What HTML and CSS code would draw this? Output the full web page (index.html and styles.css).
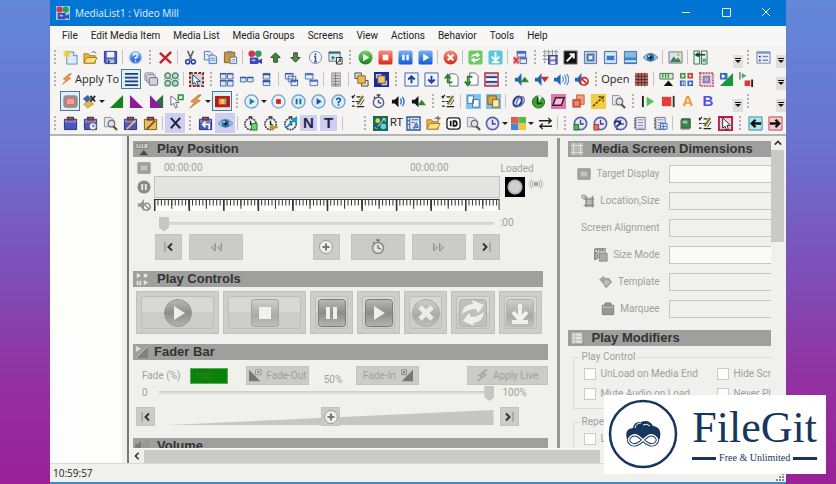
FILE: index.html
```html
<!DOCTYPE html>
<html lang="en">
<head>
<meta charset="utf-8">
<title>MediaList1 : Video Mill</title>
<link rel="stylesheet" href="styles.css">
</head>
<body>
<svg class="sprite" aria-hidden="true">
<defs>
<linearGradient id="gBlue" x2="0" y2="1"><stop offset="0" stop-color="#7db4f4"/><stop offset="1" stop-color="#1257d0"/></linearGradient>
<linearGradient id="gRed" x2="0" y2="1"><stop offset="0" stop-color="#f6907c"/><stop offset="1" stop-color="#d52a1c"/></linearGradient>
<linearGradient id="gGreen" x2="0" y2="1"><stop offset="0" stop-color="#7fd070"/><stop offset="1" stop-color="#138018"/></linearGradient>
<linearGradient id="gGrey" x2="0" y2="1"><stop offset="0" stop-color="#b9b9b7"/><stop offset=".5" stop-color="#8d8d8b"/><stop offset="1" stop-color="#b4b4b2"/></linearGradient>
<linearGradient id="gSoft" x2="0" y2="1"><stop offset="0" stop-color="#cfcfcc"/><stop offset=".6" stop-color="#a9a9a6"/><stop offset="1" stop-color="#c0c0bd"/></linearGradient>
</defs>
<symbol id="new" viewBox="0 0 16 16"><path d="M4 2h7l4 4v9H4z" fill="#dcebfb" stroke="#6b84ae"/><path d="M11 2v4h4" fill="#fff" stroke="#6b84ae"/><path d="M4 0v8M0 4h8M1 1l6 6M7 1L1 7" stroke="#e2cf2c" stroke-width="1.3"/></symbol>
<symbol id="open" viewBox="0 0 16 16"><path d="M1 14V4h5l1 2h6v8z" fill="#e9b93c" stroke="#a87a1c"/><path d="M1 14l3-6h11l-3 6z" fill="#ffe08a" stroke="#a87a1c"/><path d="M9 3q3-3 5 1" fill="none" stroke="#3a6fc0"/></symbol>
<symbol id="save" viewBox="0 0 16 16"><path d="M1.500 1.500h13v13h-12l-1-1z" fill="#4a63c8" stroke="#27357f"/><path d="M4 2h8v6H4z" fill="#eef3ff"/><path d="M4 10h8v4H4z" fill="#b9bfd4"/><path d="M5 11h2v3H5z" fill="#27357f"/></symbol>
<symbol id="help" viewBox="0 0 16 16"><circle cx="8" cy="8" r="6.500" fill="url(#gBlue)" stroke="#b4c8e4" stroke-width="1.600"/><path d="M5.800 6q0-2.200 2.200-2.200T10.200 6Q10.200 7.500 8 8.500V9.500M8 10.800v1.600" fill="none" stroke="#fff" stroke-width="1.600"/></symbol>
<symbol id="del" viewBox="0 0 16 16"><path d="M2 3l12 11M14 2L2 14" stroke="#c4212c" stroke-width="2.600"/></symbol>
<symbol id="cut" viewBox="0 0 16 16"><path d="M5 1l4 9M11 1L7 10" stroke="#5b6270" stroke-width="1.700"/><circle cx="5" cy="12.500" r="2.200" fill="none" stroke="#283a9c" stroke-width="1.600"/><circle cx="11" cy="12.500" r="2.200" fill="none" stroke="#283a9c" stroke-width="1.600"/></symbol>
<symbol id="copy" viewBox="0 0 16 16"><path d="M1.500 1.500h6l2 2v7h-8z" fill="#e5eefb" stroke="#5272b4"/><path d="M6.500 5.500h6l2 2v7h-8z" fill="#d4e2f8" stroke="#5272b4"/><path d="M8 9h5M8 11h5M3 5h3" stroke="#7c97cc"/></symbol>
<symbol id="paste" viewBox="0 0 16 16"><path d="M1.500 2.500h11v11h-11z" fill="#c99a3c" stroke="#84601c"/><path d="M4 1h6v3H4z" fill="#8a8a8a"/><path d="M7.500 7.500h7v7h-7z" fill="#eef3fd" stroke="#5a6e9c"/><path d="M9 10h4M9 12h4" stroke="#7c97cc"/></symbol>
<symbol id="media" viewBox="0 0 16 16"><circle cx="4" cy="4" r="3.500" fill="#d2344a"/><circle cx="11" cy="4" r="3.500" fill="#2c9c56"/><path d="M2 8h9v7H2zM11 11l4-2v6l-4-2z" fill="#3c46b4"/><path d="M4 10h4v2H4z" fill="#a8b4f0"/></symbol>
<symbol id="up" viewBox="0 0 16 16"><path d="M8 3l5 5h-3v5H6V8H3z" fill="#3e8a38" stroke="#24521f"/></symbol>
<symbol id="down" viewBox="0 0 16 16"><path d="M8 13l5-5h-3V3H6v5H3z" fill="#5c8450" stroke="#31502b"/></symbol>
<symbol id="info" viewBox="0 0 16 16"><circle cx="8" cy="8" r="6.500" fill="#f4f7fc" stroke="#7d8aa0"/><path d="M8 3.500v2M8 7v5.500M6.500 12.500h3M6.500 7h2" stroke="#34529c" stroke-width="1.500"/></symbol>
<symbol id="props" viewBox="0 0 16 16"><path d="M1 2h12v10H1z" fill="#dfe9ee" stroke="#5a7484"/><path d="M1 2h12v2H1z" fill="#42678c"/><path d="M4 6l4 2-4 3z" fill="#2c8a4c"/><path d="M9 8h6v7H9z" fill="#fff" stroke="#222"/><path d="M10 14l3-5M13 9v4" stroke="#222"/></symbol>
<symbol id="gplay" viewBox="0 0 16 16"><circle cx="8" cy="8" r="7.500" fill="url(#gGreen)"/><path d="M5.500 4l6.500 4-6.500 4z" fill="#fff"/></symbol>
<symbol id="rstop" viewBox="0 0 16 16"><rect x=".5" y=".5" width="15" height="15" rx="2" fill="url(#gRed)"/><path d="M5 5h6v6H5z" fill="#fff"/></symbol>
<symbol id="bpause" viewBox="0 0 16 16"><rect x=".5" y=".5" width="15" height="15" rx="2" fill="url(#gBlue)"/><path d="M4.500 5H7v6H4.500zM9 5h2.500v6H9z" fill="#fff"/></symbol>
<symbol id="bplay" viewBox="0 0 16 16"><rect x=".5" y=".5" width="15" height="15" rx="2" fill="url(#gBlue)"/><path d="M5.500 4l6.500 4-6.500 4z" fill="#fff"/></symbol>
<symbol id="rx" viewBox="0 0 16 16"><circle cx="8" cy="8" r="7.500" fill="url(#gRed)"/><path d="M5 5l6 6M11 5l-6 6" stroke="#fff" stroke-width="2.400"/></symbol>
<symbol id="refresh" viewBox="0 0 16 16"><rect x=".5" y=".5" width="15" height="15" rx="2" fill="#6fc964"/><path d="M3 8q1-4 6-4V2l4 3.500L9 8V6Q6 6 3 8zM13 8q-1 4-6 4v2l-4-3.500L7 8v2q3 0 6-2z" fill="#fff"/></symbol>
<symbol id="load" viewBox="0 0 16 16"><rect x=".5" y=".5" width="15" height="15" rx="2" fill="#5cc6dc"/><path d="M8 2v9M4 7l4 4 4-4M4 13h8" fill="none" stroke="#fff" stroke-width="2"/></symbol>
<symbol id="winx" viewBox="0 0 16 16"><path d="M4.500 1.500h9v6h-9z" fill="#dbe6fa" stroke="#4560a8"/><path d="M4 1h10v3H4z" fill="#4a6cc4"/><path d="M7.500 8.500h7v6h-7z" fill="#e8eefa" stroke="#4560a8"/><path d="M7 8h8v2H7z" fill="#4a6cc4"/><path d="M0 7h7v8H0z" fill="#f4a8b0"/><path d="M1 8l5 6M6 8l-5 6" stroke="#cc3444" stroke-width="1.600"/></symbol>
<symbol id="gridsave" viewBox="0 0 16 16"><path d="M2 0v14M6 0v14M10 0v8M14 0v8M0 2h16M0 6h16M0 10h8" stroke="#6a6a80" stroke-dasharray="2 1"/><path d="M6 6h9v9H6z" fill="#6b70b0" stroke="#33366e"/><path d="M8 7h5v3H8zM8 12h5v3H8z" fill="#eef"/></symbol>
<symbol id="black" viewBox="0 0 16 16"><path d="M1 1h14v14H1z" fill="#111" stroke="#777"/><path d="M4 12l7-7M7 4.500h4.500V9" stroke="#fff" stroke-width="2" fill="none"/></symbol>
<symbol id="scr1" viewBox="0 0 16 16"><path d="M1.500 1.500h13v13h-13z" fill="#bcd0ec" stroke="#56729c"/><path d="M4.500 4.500h7v7h-7z" fill="#7ca0d0" stroke="#34588c"/><path d="M6.500 6.500h3v3h-3z" fill="#fff"/></symbol>
<symbol id="scr2" viewBox="0 0 16 16"><path d="M1.500 1.500h13v13h-13z" fill="#c8dcf4" stroke="#4c6ca4"/><path d="M4 4h8v8H4z" fill="#eef6ff"/><path d="M4 6h8v5H4z" fill="#3878c8"/></symbol>
<symbol id="scr3" viewBox="0 0 16 16"><path d="M1.500 1.500h13v13h-13z" fill="#4084c8" stroke="#4c6ca4"/><path d="M2 2h12v6H2z" fill="#84b8e8"/><path d="M2 11h12v2H2z" fill="#dcecfa"/></symbol>
<symbol id="eye" viewBox="0 0 16 16"><path d="M0 8q8-9 16 0-8 8-16 0z" fill="#9cc4dc" stroke="#5a86a4"/><circle cx="8" cy="8" r="4" fill="#2e6cb0"/><circle cx="8" cy="8" r="1.800" fill="#123"/><circle cx="6.500" cy="6.500" r="1" fill="#fff"/></symbol>
<symbol id="pic" viewBox="0 0 16 16"><path d="M1 2h14v12H1z" fill="#cfe4f4" stroke="#777"/><path d="M2 13l4-6 3 3 2-2 3 5z" fill="#4a7c4c"/><circle cx="11" cy="5" r="1.500" fill="#e8b838"/></symbol>
<symbol id="split" viewBox="0 0 16 16"><path d="M1 1h6v14H1zM9 1h6v14H9z" fill="#eaf4ec" stroke="#2e6c50"/><path d="M3 5h10M6 3L3 5l3 2" stroke="#143" stroke-width="1.600" fill="none"/><path d="M10 9h4v4h-4z" fill="#69b088"/></symbol>
<symbol id="form" viewBox="0 0 16 16"><path d="M1 2h14v12H1z" fill="#eef3fb" stroke="#6a80a8"/><path d="M1 2h14v2H1z" fill="#7898cc"/><path d="M3 7h2M3 11h2" stroke="#223c7c" stroke-width="2"/><path d="M7 7h6M7 11h6" stroke="#7a8ca8" stroke-width="1.500"/></symbol>
<symbol id="bolt" viewBox="0 0 16 16"><path d="M11 1L3 8l4 1-5 6 11-8-4-1 5-5z" fill="#f09a3c" stroke="#a8582c" stroke-width=".7"/></symbol>
<symbol id="lines" viewBox="0 0 16 16"><path d="M1 1h14v14H1z" fill="#dce6f6"/><path d="M1 2h14M1 6h14M1 10h14M1 14h14" stroke="#1f3f78" stroke-width="1.800"/></symbol>
<symbol id="stack" viewBox="0 0 16 16"><rect x="1" y="1" width="9" height="8" rx="1" fill="#e8e8ee" stroke="#777e90"/><rect x="3" y="3" width="9" height="8" rx="1" fill="#e8e8ee" stroke="#777e90"/><rect x="5.500" y="6" width="9" height="8" rx="1" fill="#cfd4de" stroke="#5c6578"/></symbol>
<symbol id="dots4" viewBox="0 0 16 16"><g fill="#cfe09c" stroke="#4c8c84" stroke-width="1.500"><circle cx="4" cy="4" r="3"/><circle cx="12" cy="4" r="3"/><circle cx="4" cy="12" r="3"/><circle cx="12" cy="12" r="3"/></g><path d="M7 8h2M8 7v2M0 8h1M15 8h1" stroke="#4c8c84"/></symbol>
<symbol id="pick" viewBox="0 0 16 16"><path d="M1 1h14v14H1z" fill="#ccd4d4" stroke="#8c2424" stroke-width="2" stroke-dasharray="3 1.500"/><path d="M4 3l8 7H8l2 4-2 1-2-4-2 2z" fill="#fff" stroke="#123c5c"/></symbol>
<symbol id="win4" viewBox="0 0 16 16"><g fill="#dce8fa" stroke="#4868a4"><path d="M1.500 1.500h6v6h-6zM9 1.500h6v6H9zM1.500 9h6v6h-6zM9 9h6v6H9z"/></g><path d="M1 2h7M9 2h6M1 9.500h7M9 9.500h6" stroke="#3050a0" stroke-width="1.500"/></symbol>
<symbol id="win2h" viewBox="0 0 16 16"><g fill="#dce8fa" stroke="#4868a4"><path d="M1.500 5.500h6v5h-6zM9 5.500h6v5H9z"/></g><path d="M1 6h7M9 6h6" stroke="#3050a0" stroke-width="1.500"/></symbol>
<symbol id="win2v" viewBox="0 0 16 16"><g fill="#dce8fa" stroke="#4868a4"><path d="M4.500 1.500h7v6h-7zM4.500 9h7v5.500h-7z"/></g><path d="M4 2.500h8M4 10h8" stroke="#3050a0" stroke-width="2"/></symbol>
<symbol id="casc" viewBox="0 0 16 16"><g fill="#e8f0fc" stroke="#4868a4"><path d="M1.500 1.500h8v6h-8zM4.500 4.500h8v6h-8zM7.500 8.500h7v6h-7z"/></g><path d="M1 2h9M7 9.500h8" stroke="#3050a0" stroke-width="1.500"/></symbol>
<symbol id="casc2" viewBox="0 0 16 16"><g fill="#e8f0fc" stroke="#5878b4"><path d="M1.500 1.500h8v6h-8zM6.500 8.500h8v6h-8z"/></g><path d="M1 2.500h9M6 9.500h9" stroke="#4a70c8" stroke-width="2"/></symbol>
<symbol id="list" viewBox="0 0 16 16"><path d="M3 1h9v14H3z" fill="#d8d8d4" stroke="#8a8a88"/><path d="M4 4h7M4 7h7M4 10h7M4 13h7M7 1v14" stroke="#777"/></symbol>
<symbol id="front" viewBox="0 0 16 16"><path d="M1 1h7v6H1z" fill="#ddd" stroke="#444"/><path d="M8 9h7v6H8z" fill="#ddd" stroke="#444"/><path d="M4 4h8v8H4z" fill="#f0b84c" stroke="#8a6a24"/></symbol>
<symbol id="frontb" viewBox="0 0 16 16"><path d="M0 0h16v16H0z" fill="#1a28a8"/><path d="M2 2h6v5H2zM8 9h6v5H8z" fill="#ccc"/><path d="M4 4h8v8H4z" fill="#f4c468" stroke="#553"/></symbol>
<symbol id="boxup" viewBox="0 0 16 16"><path d="M1 1h14v14H1z" fill="#f0f5fe" stroke="#3c62a8"/><path d="M8 12V5M4.500 8L8 4.500 11.500 8" fill="none" stroke="#1c3ca0" stroke-width="2"/></symbol>
<symbol id="boxdn" viewBox="0 0 16 16"><path d="M1 1h14v14H1z" fill="#f0f5fe" stroke="#3c62a8"/><path d="M8 4v7M4.500 8L8 11.500 11.500 8" fill="none" stroke="#1c3ca0" stroke-width="2"/></symbol>
<symbol id="pgup" viewBox="0 0 16 16"><path d="M6 2h6l3 3v10H6z" fill="#fff" stroke="#667"/><path d="M9 11H4V4M1 7l3-4 3 4" fill="none" stroke="#23862c" stroke-width="2"/></symbol>
<symbol id="pgdn" viewBox="0 0 16 16"><path d="M6 1h6l3 3v10H6z" fill="#fff" stroke="#667"/><path d="M9 5H4v8M1 10l3 4 3-4" fill="none" stroke="#23862c" stroke-width="2"/></symbol>
<symbol id="band" viewBox="0 0 16 16"><path d="M1 1h14v14H1z" fill="#cdd9f2" stroke="#b0303c" stroke-width="1.500"/><path d="M2 5.500h12M2 10.500h12" stroke="#283c80" stroke-width="2"/><path d="M2 7h12v2H2z" fill="#fff"/></symbol>
<symbol id="volup" viewBox="0 0 16 16"><path d="M1 6h3l4-5v14l-4-5H1z" fill="#2468b0"/><path d="M7 11l4.500-6 4.500 6z" fill="#2a8a34"/></symbol>
<symbol id="voldn" viewBox="0 0 16 16"><path d="M1 6h3l4-5v14l-4-5H1z" fill="#2468b0"/><path d="M7 5l4.500 6L16 5z" fill="#c83228"/></symbol>
<symbol id="vol" viewBox="0 0 16 16"><path d="M0 6h3l4-4v12l-4-4H0z" fill="#2468b0"/><path d="M9 5q2 3 0 6M11 3q4 5 0 10M13.500 2q4.500 6 0 12" fill="none" stroke="#4c8cd0" stroke-width="1.200"/></symbol>
<symbol id="volk" viewBox="0 0 16 16"><path d="M1 6h3l4-4v12l-4-4H1z" fill="#111"/><path d="M10 5q2 3 0 6M12 3q4 5 0 10" fill="none" stroke="#2c6cc0" stroke-width="1.400"/></symbol>
<symbol id="volkup" viewBox="0 0 16 16"><path d="M1 6h3l4-4v12l-4-4H1z" fill="#111"/><path d="M7 12l4.500-6 4.500 6z" fill="#2a8a34"/></symbol>
<symbol id="mute" viewBox="0 0 16 16"><path d="M1 6h3l4-5v14l-4-5H1z" fill="#2468b0"/><circle cx="11" cy="10" r="4" fill="#fff" stroke="#cc2a24" stroke-width="1.800"/><path d="M8.500 7.500l5 5" stroke="#cc2a24" stroke-width="1.800"/></symbol>
<symbol id="redgrid" viewBox="0 0 16 16"><path d="M1 1h14v14H1z" fill="#b86c64"/><path d="M1 4.500h14M1 8h14M1 11.500h14M4.500 1v14M8 1v14M11.500 1v14" stroke="#523030"/></symbol>
<symbol id="posbar" viewBox="0 0 16 16"><path d="M1 1.500h14v6H1z" fill="#d4f0d4" stroke="#4c6a4c"/><path d="M4 2v4M7 2v4M10 2v4" stroke="#31a038" stroke-width="1.500"/><path d="M5 15l5-6 5 6z" fill="#111"/></symbol>
<symbol id="ctl4" viewBox="0 0 16 16"><path d="M1 1h6v6H1z" fill="#3c9c3c"/><path d="M9 1h6v6H9z" fill="#d44434"/><path d="M1 9h6v6H1zM9 9h6v6H9z" fill="#2e68c8"/><path d="M3 2l3 2-3 2zM11 3h2v2h-2zM3 10h1v4H3zM5 10h1v4H5zM11 10l3 2-3 2z" fill="#fff"/></symbol>
<symbol id="wctl4" viewBox="0 0 16 16"><path d="M2 1l5 3-5 3zM10 2h4v4h-4zM2 10h2v5H2zM5 10h2v5H5zM10 9l5 3-5 3z" fill="#e6e6e4"/></symbol>
<symbol id="target" viewBox="0 0 16 16"><path d="M1 1h14v14H1z" fill="#ecd4dc" stroke="#c86478" stroke-dasharray="2 1" stroke-width="2"/><path d="M4 4h8v8H4z" fill="#7484cc"/><path d="M6 6h4v4H6z" fill="#e8a0ac"/></symbol>
<symbol id="fade" viewBox="0 0 16 16"><path d="M15 1v14H1z" fill="#159838"/><path d="M1 1h8v7H1z" fill="#2e68c8"/><path d="M3 2l4 2.500L3 7z" fill="#fff"/></symbol>
<symbol id="fadein" viewBox="0 0 16 16"><path d="M16 1v14H2z" fill="#777"/><path d="M2 1h6v6H2z" fill="#d6d6d4" stroke="#777"/><path d="M4 2l3 2-3 2z" fill="#666"/></symbol>
<symbol id="fadeout" viewBox="0 0 16 16"><path d="M0 1v14h14z" fill="#777"/><path d="M8 1h7v6H8z" fill="#d6d6d4" stroke="#8a8a88"/><path d="M10 3h3v2h-3z" fill="#777"/></symbol>
<symbol id="fader" viewBox="0 0 16 16"><path d="M15 1v14H1z" fill="#828280"/><path d="M15 1L1 15" stroke="#c8c8c6"/><path d="M1 1l6 3-6 4z" fill="#dededc"/></symbol>
<symbol id="playstop" viewBox="0 0 16 16"><path d="M1 0v8" stroke="#777" stroke-width="1.500"/><path d="M3 1l5 3-5 3z" fill="#48b058"/><path d="M6 9h6v6H6z" fill="#dc3c30"/><path d="M14 8v8" stroke="#222" stroke-width="2"/></symbol>
<symbol id="screenred" viewBox="0 0 16 16"><rect x="1" y="2" width="14" height="12" rx="2" fill="#9c9c9c" stroke="#777"/><path d="M3.500 4.500h9v7h-9z" fill="#f0a0a0" stroke="#dc5858"/></symbol>
<symbol id="brush" viewBox="0 0 16 16"><path d="M1 5l5-4 4 4-5 4z" fill="#3c66b4"/><path d="M2 11l7-5 3 5-6 4z" fill="#e8b83c" stroke="#8a6a24" stroke-width=".6"/><path d="M9 2l5 6M14 2L9 8" stroke="#222" stroke-width="1.800"/></symbol>
<symbol id="trig" viewBox="0 0 16 16"><path d="M15 1v14H1z" fill="#12851c"/></symbol>
<symbol id="trip" viewBox="0 0 16 16"><path d="M1 1v14h14z" fill="#90189c"/></symbol>
<symbol id="tripg" viewBox="0 0 16 16"><path d="M15 1v14H1z" fill="#12753c"/><path d="M1 1v14h13z" fill="#90189c"/><path d="M8 8l7-7v14z" fill="#2e6c48"/></symbol>
<symbol id="cursor" viewBox="0 0 16 16"><path d="M2 2l9 7H7l2 5-2 1-2-5-3 2z" fill="#fff" stroke="#667" /><path d="M10 1h5v5h-5z" fill="#d8f0d8" stroke="#25902c" stroke-width="1.500"/></symbol>
<symbol id="redbox" viewBox="0 0 16 16"><path d="M1 3h14v10H1z" fill="#a01818" stroke="#c41c1c" stroke-width="2"/><path d="M4 5h8v6H4z" fill="#e8d058"/><path d="M4 5h2v6H4z" fill="#e87858"/><path d="M10 5h2v6h-2z" fill="#70b078"/></symbol>
<symbol id="cplay" viewBox="0 0 16 16"><circle cx="8" cy="8" r="7" fill="#e2f1fb" stroke="#6f9cc0" stroke-width="1.400"/><path d="M6 4.500L11.500 8 6 11.500z" fill="#15848c"/></symbol>
<symbol id="cstop" viewBox="0 0 16 16"><circle cx="8" cy="8" r="7" fill="#e2f1fb" stroke="#7fa6c4" stroke-width="1.400"/><path d="M5.500 5.500h5v5h-5z" fill="#d81c1c"/></symbol>
<symbol id="cpause" viewBox="0 0 16 16"><circle cx="8" cy="8" r="7" fill="#d8ecfb" stroke="#6f9cc0" stroke-width="1.400"/><path d="M5 5h2v6H5zM9 5h2v6H9z" fill="#1c68b8"/></symbol>
<symbol id="cnext" viewBox="0 0 16 16"><circle cx="8" cy="8" r="7" fill="#d8ecfb" stroke="#6f9cc0" stroke-width="1.400"/><path d="M6 4.500L11.500 8 6 11.500z" fill="#1c50a8"/></symbol>
<symbol id="chelp" viewBox="0 0 16 16"><circle cx="8" cy="8" r="7" fill="#d8ecfb" stroke="#6f9cc0" stroke-width="1.400"/><path d="M6 6.500q0-2 2-2t2 1.800Q10 7.500 8 8.500V10M8 11v1.500" fill="none" stroke="#1c50a8" stroke-width="1.600"/></symbol>
<symbol id="edit" viewBox="0 0 16 16"><path d="M1 2l1 2 2-3M1 8h3M1 13h3M6 3h4M5 8h4M6 13.500h8" fill="none" stroke="#222" stroke-width="1.300"/><path d="M13 2L7 11" stroke="#8a7a28" stroke-width="2.400"/><path d="M14 6l-4 6" stroke="#333"/></symbol>
<symbol id="clock" viewBox="0 0 16 16"><path d="M6 1h4M8 1v2M3 3l2 2" stroke="#444" stroke-width="1.600"/><circle cx="8" cy="9" r="5.500" fill="#f0f2fa" stroke="#5a5e78" stroke-width="1.500"/><path d="M8 6v3l3 1" stroke="#2a4cb0" stroke-width="1.500" fill="none"/></symbol>
<symbol id="bcopy" viewBox="0 0 16 16"><path d="M0 0h16v16H0z" fill="#7cc4ec"/><path d="M2 2h6v8H2zM7 6h7v8H7z" fill="#fff" stroke="#4870b0"/></symbol>
<symbol id="bpaste" viewBox="0 0 16 16"><path d="M0 0h16v16H0z" fill="#84bce0"/><path d="M2 2h9v9H2z" fill="#d8a83c" stroke="#84601c"/><path d="M7 6h7v8H7z" fill="#f4ecb4" stroke="#84601c"/></symbol>
<symbol id="link" viewBox="0 0 16 16"><ellipse cx="7" cy="8" rx="4" ry="5.500" transform="rotate(30 7 8)" fill="none" stroke="#2c3c84" stroke-width="2.200"/><ellipse cx="10" cy="8" rx="3.500" ry="5.500" transform="rotate(30 10 8)" fill="none" stroke="#5870b8" stroke-width="1.500"/></symbol>
<symbol id="pie" viewBox="0 0 16 16"><circle cx="8" cy="8.500" r="6.500" fill="#3ca434" stroke="#206c1c"/><path d="M8 8.500V1l4 2z" fill="#fff"/><path d="M7 4v6h5" fill="none" stroke="#143c14" stroke-width="1.600"/></symbol>
<symbol id="para" viewBox="0 0 16 16"><path d="M0 0h16v16H0z" fill="#dc78b0"/><path d="M5 4h9l-3 8H2z" fill="#f4c0dc" stroke="#401c34" stroke-width="1.600"/></symbol>
<symbol id="orange" viewBox="0 0 16 16"><path d="M6 1h8v10H6z" fill="#f0a078" stroke="#c85c34"/><path d="M2 6h8v8H2z" fill="#e0694c" stroke="#b84428"/><path d="M4 8h4v4H4z" fill="#f0907c"/></symbol>
<symbol id="yellow" viewBox="0 0 16 16"><path d="M0 0h16v16H0z" fill="#f4cc40"/><path d="M2 13L12 4M8 3h5v5" fill="none" stroke="#6c4c14" stroke-width="1.800" stroke-dasharray="3 1"/></symbol>
<symbol id="find" viewBox="0 0 16 16"><path d="M1.500 1.500h7l2 2v8h-9z" fill="#e6e8ee" stroke="#8890a4"/><circle cx="9" cy="8" r="3.500" fill="#d4e6f4" stroke="#777" stroke-width="1.400"/><path d="M11 11l4 4" stroke="#6a5040" stroke-width="2.400"/></symbol>
<symbol id="barplay" viewBox="0 0 16 16"><path d="M2 2v12" stroke="#222" stroke-width="2"/><path d="M6 3l8 5-8 5z" fill="#52c060"/></symbol>
<symbol id="barstop" viewBox="0 0 16 16"><path d="M1 3h10v10H1z" fill="#e43c38"/><path d="M13.500 2v12" stroke="#333" stroke-width="2"/></symbol>
<symbol id="case" viewBox="0 0 16 16"><path d="M5 4V1.500h6V4" fill="#999" stroke="#444" stroke-width="1.600"/><path d="M1.500 3.500h13v11h-13z" fill="#4858c0" stroke="#28306c"/><path d="M2 4h12v3H2z" fill="#7c88dc"/><path d="M4 3h8v2H4z" fill="#8c3038"/></symbol>
<symbol id="casec" viewBox="0 0 16 16"><use href="#case"/><circle cx="10.500" cy="11" r="4" fill="#eef" stroke="#555"/><path d="M10.500 9v2h2" fill="none" stroke="#24c"/></symbol>
<symbol id="casep" viewBox="0 0 16 16"><use href="#case"/><path d="M4 14l9-9" stroke="#e8b464" stroke-width="2.200"/></symbol>
<symbol id="casey" viewBox="0 0 16 16"><path d="M5 4V1.500h6V4" fill="#999" stroke="#444" stroke-width="1.600"/><path d="M1.500 3.500h13v11h-13z" fill="#e8c060" stroke="#7c5c1c"/><path d="M4 3h8v2H4z" fill="#8c3038"/><path d="M4 14l9-9" stroke="#8a4c24" stroke-width="2"/></symbol>
<symbol id="caseb" viewBox="0 0 16 16"><use href="#case"/><path d="M12 14V9H6M8 6L5 9l3 3" fill="none" stroke="#fff" stroke-width="1.800"/></symbol>
<symbol id="kx" viewBox="0 0 16 16"><path d="M3 2l10 11M13 2L3 13" stroke="#222840" stroke-width="2.200"/></symbol>
<symbol id="watch" viewBox="0 0 16 16"><circle cx="8" cy="8.500" r="6" fill="#f4f4f8" stroke="#3c4454" stroke-width="1.800" stroke-dasharray="2 .8"/><path d="M6 1h4M8 5v4h2" fill="none" stroke="#222" stroke-width="1.500"/></symbol>
<symbol id="watchg" viewBox="0 0 16 16"><use href="#watch"/><path d="M9 8h6v7H9z" fill="#70d070" stroke="#1a7820"/></symbol>
<symbol id="watchy" viewBox="0 0 16 16"><use href="#watch"/><path d="M16 12H9M11 9l-3 3 3 3" fill="none" stroke="#b49c14" stroke-width="2"/></symbol>
<symbol id="watchb" viewBox="0 0 16 16"><use href="#watch"/><path d="M3 13l8-8M10 4l4-2v5z" stroke="#149cbc" stroke-width="2" fill="#149cbc"/></symbol>
<symbol id="net" viewBox="0 0 16 16"><path d="M0 0h16v16H0z" fill="#146c5c"/><circle cx="5" cy="5" r="2.500" fill="#d8d84c"/><circle cx="11" cy="11" r="3" fill="#7cc8d8"/><path d="M5 11l7-8M10 3h3v3M2 12l2 2" stroke="#eee" fill="none"/></symbol>
<symbol id="film" viewBox="0 0 16 16"><path d="M1 1h14v14H1z" fill="#dce6f4" stroke="#345a94" stroke-width="1.500"/><path d="M4 2v12M1 5h3M1 9h3" stroke="#345a94"/><path d="M6 4h7M6 7h3M11 7l-3 6 5-1z" stroke="#345a94" fill="#89a8d8"/></symbol>
<symbol id="openp" viewBox="0 0 16 16"><use href="#open"/><path d="M13 0v5M10.500 2.500h5" stroke="#964" stroke-width="1.400"/></symbol>
<symbol id="idcard" viewBox="0 0 16 16"><rect x="1" y="2" width="14" height="12" rx="3" fill="#fff" stroke="#222" stroke-width="1.400"/><path d="M5 5v6M8 5.500h1.500q2 0 2 2.500t-2 2.500H8z" fill="none" stroke="#111" stroke-width="1.800"/></symbol>
<symbol id="time" viewBox="0 0 16 16"><circle cx="8" cy="8" r="6.500" fill="#e6e8fa" stroke="#5c62a4" stroke-width="1.800"/><path d="M8 4v4.500h3.500" fill="none" stroke="#384080" stroke-width="1.400"/></symbol>
<symbol id="timeg" viewBox="0 0 16 16"><use href="#time"/><path d="M1 9h5v6H1z" fill="#50b850" stroke="#206c24"/></symbol>
<symbol id="timer" viewBox="0 0 16 16"><use href="#time"/><path d="M1 9h5v6H1z" fill="#e87060" stroke="#b42c20"/></symbol>
<symbol id="timeq" viewBox="0 0 16 16"><use href="#time"/><path d="M2 8q0-2.500 2.500-2.500T7 8Q7 9.500 4.500 10.500V12M4.500 13.500V15" fill="none" stroke="#1c2c6c" stroke-width="1.800"/></symbol>
<symbol id="colors" viewBox="0 0 16 16"><path d="M0 1h8v7H0z" fill="#e85c44"/><path d="M8 1h8v7H8z" fill="#58b84c"/><path d="M0 8h8v7H0z" fill="#4884dc"/><path d="M8 8h8v7H8z" fill="#f4c83c"/></symbol>
<symbol id="swap" viewBox="0 0 16 16"><path d="M1 5h13M11 2l3 3-3 3M15 11H2M5 8l-3 3 3 3" fill="none" stroke="#222" stroke-width="1.500"/></symbol>
<symbol id="note" viewBox="0 0 16 16"><path d="M3 1.500h10v13H3z" fill="#e8eaf4" stroke="#6a7088"/><path d="M5 4h6M5 7h6M5 10h6M5 13h6" stroke="#8088a4"/><path d="M2 2v12" stroke="#444" stroke-dasharray="1 1" stroke-width="2"/></symbol>
<symbol id="noteb" viewBox="0 0 16 16"><use href="#note"/><path d="M8 8h7v6H8z" fill="#dcecff" stroke="#3c68c0"/><path d="M11 9v5M9 11h5" stroke="#3c68c0"/></symbol>
<symbol id="book" viewBox="0 0 16 16"><path d="M4 3h9v10H4z" fill="#3c8450" stroke="#1c4c2c"/><path d="M5 5h5v3H5z" fill="#9cc8a0"/><path d="M3 4v10h9" stroke="#777" fill="none"/></symbol>
<symbol id="curred" viewBox="0 0 16 16"><path d="M1 1h14v14H1z" fill="#e8d0d8" stroke="#b81c48" stroke-width="2"/><path d="M5 2l8 8H9.500l1.500 4-2 1-1.500-4L5 13z" fill="#fff" stroke="#222"/></symbol>
<symbol id="left" viewBox="0 0 16 16"><path d="M1 1h14v14H1z" fill="#a8e8f0" stroke="#3c8c94"/><path d="M14 8H5M8 4L4 8l4 4" fill="none" stroke="#111" stroke-width="2.600"/></symbol>
<symbol id="right" viewBox="0 0 16 16"><path d="M1 1h14v14H1z" fill="#f8c8cc" stroke="#b04c50"/><path d="M2 8h9M8 4l4 4-4 4" fill="none" stroke="#111" stroke-width="2.600"/></symbol>
<symbol id="plus" viewBox="0 0 16 16"><circle cx="8" cy="8" r="6.500" fill="#f0f0ed" stroke="#999"/><path d="M8 4.500v7M4.500 8h7" stroke="#777" stroke-width="2"/></symbol>
<symbol id="first" viewBox="0 0 16 16"><path d="M4 3v10" stroke="#888"/><path d="M11 4.500L7.500 8l3.500 3.500" fill="none" stroke="#333" stroke-width="2"/></symbol>
<symbol id="last" viewBox="0 0 16 16"><path d="M12 3v10" stroke="#888"/><path d="M5 4.500L8.500 8 5 11.500" fill="none" stroke="#333" stroke-width="2"/></symbol>
<symbol id="rew" viewBox="0 0 16 16"><path d="M7 4v8L3 8zM13 4v8L9 8z" fill="#b7b7b5"/><path d="M7.500 4v8M13.500 4v8M3 8l4 4M9 8l4 4" stroke="#929290"/></symbol>
<symbol id="ffw" viewBox="0 0 16 16"><path d="M3 4v8l4-4zM9 4v8l4-4z" fill="#b7b7b5"/><path d="M2.500 4v8M8.500 4v8M7 8l-4 4M13 8l-4 4" stroke="#929290"/></symbol>
<symbol id="radio" viewBox="0 0 16 16"><circle cx="8" cy="8" r="2" fill="#aaa" stroke="#888"/><path d="M5 4.500q-2.500 3.500 0 7M11 4.500q2.500 3.500 0 7M3 3q-4 5 0 10M13 3q4 5 0 10" fill="none" stroke="#999"/></symbol>
<symbol id="mon" viewBox="0 0 16 16"><path d="M1 2h14v12H1z" fill="#aaa" stroke="#8b8b89"/><path d="M3.500 4.500h9v7h-9z" fill="#c4c4c1" stroke="#8f8f8d"/></symbol>
<symbol id="gpause" viewBox="0 0 16 16"><circle cx="8" cy="8" r="7.500" fill="#8a8a88"/><path d="M5 4.500h2v7H5zM9 4.500h2v7H9z" fill="#eee"/></symbol>
<symbol id="crop" viewBox="0 0 16 16"><path d="M4 1v14M12 1v14M1 4h14M1 12h14" stroke="#8a8a88" stroke-width="1.400"/><path d="M5 5h6v6H5z" fill="#c2c2bf"/></symbol>
<symbol id="wcrop" viewBox="0 0 16 16"><path d="M1 1h14v14H1z" fill="#b6b6b4"/><path d="M4 1v14M12 1v14M1 4h14M1 12h14" stroke="#dededc" stroke-width="1.400"/></symbol>
<symbol id="wform" viewBox="0 0 16 16"><path d="M1 1h14v14H1z" fill="#c6c6c4" stroke="#8a8a88"/><path d="M3 4h2M3 8h2M3 12h2M7 4h6M7 8h6M7 12h6" stroke="#e8e8e6" stroke-width="2"/></symbol>
<symbol id="loc" viewBox="0 0 16 16"><path d="M5 4h10v11H5z" fill="#b9b9b6"/><path d="M6 2v13M13 2v13M3 6h12M3 13h12" stroke="#8a8a88" stroke-width="1.400"/><circle cx="3" cy="3" r="2" fill="#ddd" stroke="#777"/></symbol>
<symbol id="size" viewBox="0 0 16 16"><path d="M1 1h13M1 1v13M4 1v3M7 1v3M10 1v3M1 6h3M1 9h3M1 12h3" stroke="#777" stroke-width="1.500"/><path d="M7 3h6v8H4V6z" fill="#ccc" stroke="#888"/><path d="M6 6h9v9H6z" fill="#aaa" stroke="#888"/></symbol>
<symbol id="tmpl" viewBox="0 0 16 16"><path d="M0 5l5-4 3 3 3-1 4 5-7 7-3-5z" fill="#a6a6a4"/><path d="M4 8l5-4 5 4-6 6z" fill="#bcbcba" stroke="#8a8a88"/></symbol>
<symbol id="Pplay" viewBox="0 0 28 28"><circle cx="14" cy="14" r="13.500" fill="url(#gGrey)" stroke="#989896"/><path d="M10 7l11 7-11 7z" fill="#eeeeec"/></symbol>
<symbol id="Pstop" viewBox="0 0 28 28"><rect x=".5" y=".5" width="27" height="27" rx="3" fill="url(#gSoft)" stroke="#a3a3a1"/><path d="M8 8h12v12H8z" fill="#f0f0ee"/></symbol>
<symbol id="Ppause" viewBox="0 0 28 28"><rect x=".5" y=".5" width="27" height="27" rx="3" fill="url(#gGrey)" stroke="#7c7c7a"/><path d="M8 8h4v12H8zM15 8h4v12h-4z" fill="#eeeeec"/></symbol>
<symbol id="Pnext" viewBox="0 0 28 28"><rect x=".5" y=".5" width="27" height="27" rx="3" fill="url(#gGrey)" stroke="#7c7c7a"/><path d="M9 7l11 7-11 7z" fill="#eeeeec"/></symbol>
<symbol id="Px" viewBox="0 0 28 28"><circle cx="14" cy="14" r="13.500" fill="url(#gSoft)" stroke="#a8a8a6"/><path d="M8 8l12 12M20 8L8 20" stroke="#ececea" stroke-width="5"/></symbol>
<symbol id="Prefresh" viewBox="0 0 28 28"><rect x=".5" y=".5" width="27" height="27" rx="3" fill="#bfbfbc" stroke="#b0b0ad"/><path d="M3 15Q4 5 14 5l-1-4 12 5-6 8-2-4q-7 0-14 5zM25 13q-1 10-11 11l1 3-11-5 6-8 2 4q7 0 13-5z" fill="#eeeeec"/></symbol>
<symbol id="Pload" viewBox="0 0 28 28"><rect x=".5" y=".5" width="27" height="27" rx="3" fill="url(#gSoft)" stroke="#b0b0ad"/><path d="M14 5v15M7 13l7 8 7-8M6 23h16" fill="none" stroke="#f0f0ee" stroke-width="4"/></symbol>
</svg>

<div class="window">
  <header class="titlebar">
    <svg class="ic"><use href="#media"/></svg>
    <h1>MediaList1 : Video Mill</h1>
    <div class="caption">
      <button aria-label="Minimize"><svg viewBox="0 0 10 10"><path d="M1 5.500h8"/></svg></button>
      <button aria-label="Maximize"><svg viewBox="0 0 10 10"><path d="M1.500 1.500h8v8h-8z"/></svg></button>
      <button aria-label="Close"><svg viewBox="0 0 10 10"><path d="M1 1l8 8M9 1L1 9"/></svg></button>
    </div>
  </header>

  <nav class="menu">
    <button>File</button><button>Edit Media Item</button><button>Media List</button><button>Media Groups</button><button>Screens</button><button>View</button><button>Actions</button><button>Behavior</button><button>Tools</button><button>Help</button>
  </nav>

  <div class="bars">
    <div class="bar">
      <div class="group"><button><svg><use href="#new"/></svg></button><button><svg><use href="#open"/></svg></button><button><svg><use href="#save"/></svg></button><i></i><button><svg><use href="#help"/></svg></button></div>
      <div class="group"><button><svg><use href="#del"/></svg></button><i></i><button><svg><use href="#cut"/></svg></button><button><svg><use href="#copy"/></svg></button><button><svg><use href="#paste"/></svg></button><i></i><button><svg><use href="#media"/></svg></button><button><svg><use href="#up"/></svg></button><button><svg><use href="#down"/></svg></button><button><svg><use href="#info"/></svg></button><button><svg><use href="#props"/></svg></button></div>
      <div class="group"><button><svg><use href="#gplay"/></svg></button><button><svg><use href="#rstop"/></svg></button><button><svg><use href="#bpause"/></svg></button><button><svg><use href="#bplay"/></svg></button><i></i><button><svg><use href="#rx"/></svg></button><i></i><button><svg><use href="#refresh"/></svg></button><button><svg><use href="#load"/></svg></button><i></i><button><svg><use href="#winx"/></svg></button></div>
      <div class="group"><button><svg><use href="#gridsave"/></svg></button><button><svg><use href="#black"/></svg></button><button><svg><use href="#scr1"/></svg></button><button><svg><use href="#scr2"/></svg></button><button><svg><use href="#scr3"/></svg></button><button><svg><use href="#eye"/></svg></button><i></i><button><svg><use href="#pic"/></svg></button><i></i><button><svg><use href="#split"/></svg></button></div>
      <button class="more first-more" aria-label="More"></button>
      <div class="group"><button><svg><use href="#form"/></svg></button></div>
      <button class="more" aria-label="More"></button>
    </div>
    <div class="bar">
      <div class="group"><button class="text"><svg><use href="#bolt"/></svg>Apply To</button><button class="on"><svg><use href="#lines"/></svg></button><button><svg><use href="#stack"/></svg></button><button><svg><use href="#dots4"/></svg></button><i></i><button><svg><use href="#pick"/></svg></button></div>
      <div class="group"><button><svg><use href="#win4"/></svg></button><button><svg><use href="#win2h"/></svg></button><button><svg><use href="#win2v"/></svg></button><i></i><button><svg><use href="#casc"/></svg></button><button><svg><use href="#casc2"/></svg></button><i></i><button><svg><use href="#list"/></svg></button><i></i><button><svg><use href="#front"/></svg></button><button><svg><use href="#frontb"/></svg></button></div>
      <div class="group"><button><svg><use href="#boxup"/></svg></button><button><svg><use href="#boxdn"/></svg></button><button><svg><use href="#pgup"/></svg></button><button><svg><use href="#pgdn"/></svg></button><button><svg><use href="#band"/></svg></button></div>
      <div class="group"><button><svg><use href="#volup"/></svg></button><button><svg><use href="#voldn"/></svg></button><button><svg><use href="#vol"/></svg></button><button><svg><use href="#mute"/></svg></button></div>
      <div class="group"><button class="text">Open</button><button><svg><use href="#redgrid"/></svg></button><i></i><button><svg><use href="#posbar"/></svg></button><button><svg><use href="#ctl4"/></svg></button><button><svg><use href="#target"/></svg></button><button><svg><use href="#fade"/></svg></button><button><svg><use href="#playstop"/></svg></button></div>
      <button class="more last-more" aria-label="More"></button>
    </div>
    <div class="bar">
      <div class="group bare"><button class="on"><svg><use href="#screenred"/></svg></button><button class="drop"><svg><use href="#brush"/></svg></button><button><svg><use href="#trig"/></svg></button><button><svg><use href="#trip"/></svg></button><button><svg><use href="#tripg"/></svg></button><button><svg><use href="#cursor"/></svg></button><button class="drop"><svg><use href="#bolt"/></svg></button><button class="on"><svg><use href="#redbox"/></svg></button></div>
      <div class="group"><button class="drop"><svg><use href="#cplay"/></svg></button><button><svg><use href="#cstop"/></svg></button><button><svg><use href="#cpause"/></svg></button><button><svg><use href="#cnext"/></svg></button><button><svg><use href="#chelp"/></svg></button><button><svg><use href="#edit"/></svg></button><button><svg><use href="#clock"/></svg></button><button><svg><use href="#volk"/></svg></button><button><svg><use href="#volkup"/></svg></button></div>
      <div class="group"><button><svg><use href="#edit"/></svg></button><i></i><button><svg><use href="#bcopy"/></svg></button><button><svg><use href="#bpaste"/></svg></button><i></i><button><svg><use href="#link"/></svg></button><button><svg><use href="#pie"/></svg></button><button><svg><use href="#para"/></svg></button><button><svg><use href="#orange"/></svg></button><button><svg><use href="#yellow"/></svg></button><button><svg><use href="#find"/></svg></button></div>
      <div class="group"><button><svg><use href="#barplay"/></svg></button><button><svg><use href="#barstop"/></svg></button><button class="letter amber">A</button><button class="letter violet">B</button></div>
      <button class="more first-more" aria-label="More"></button>
      <div class="group empty"></div>
      <button class="more" aria-label="More"></button>
    </div>
    <div class="bar">
      <div class="group"><button><svg><use href="#case"/></svg></button><button><svg><use href="#casec"/></svg></button><button><svg><use href="#find"/></svg></button><button><svg><use href="#casep"/></svg></button><button><svg><use href="#casey"/></svg></button><i></i><button class="hot"><svg><use href="#kx"/></svg></button></div>
      <div class="group"><button><svg><use href="#caseb"/></svg></button><button class="hot"><svg><use href="#eye"/></svg></button><i></i><button><svg><use href="#watchg"/></svg></button><button><svg><use href="#watchy"/></svg></button><button><svg><use href="#watchb"/></svg></button><button class="letter hot small">N</button><button class="letter hot small">T</button><i></i></div>
      <div class="group wide"><button><svg><use href="#net"/></svg></button><button class="rt">RT</button><button><svg><use href="#film"/></svg></button><button><svg><use href="#openp"/></svg></button><button><svg><use href="#idcard"/></svg></button><button><svg><use href="#find"/></svg></button><button class="drop"><svg><use href="#time"/></svg></button><button class="drop"><svg><use href="#colors"/></svg></button><button><svg><use href="#swap"/></svg></button><i></i></div>
      <div class="group"><button><svg><use href="#timeg"/></svg></button><button><svg><use href="#timer"/></svg></button><button><svg><use href="#timeq"/></svg></button><button><svg><use href="#note"/></svg></button><button><svg><use href="#noteb"/></svg></button><i></i><button><svg><use href="#book"/></svg></button><button><svg><use href="#edit"/></svg></button><button><svg><use href="#curred"/></svg></button></div>
      <div class="group"><button><svg><use href="#left"/></svg></button><button><svg><use href="#right"/></svg></button></div>
    </div>
  </div>

  <main class="work">
    <aside class="medialist"></aside>
    <div class="content">
      <div class="panes">
        <div class="player">
          <section>
            <h2><svg class="gray"><use href="#posbar"/></svg>Play Position</h2>
            <div class="position">
              <svg class="ic"><use href="#mon"/></svg>
              <div class="times"><span>00:00:00</span><span>00:00:00</span></div>
              <span class="loaded">Loaded</span>
              <svg class="ic"><use href="#gpause"/></svg>
              <div class="progress"></div>
              <div class="lamps"><span class="lamp"></span><svg class="ic"><use href="#radio"/></svg></div>
              <svg class="ic gray"><use href="#mute"/></svg>
              <svg class="ruler" viewBox="0 0 347 11" preserveAspectRatio="none">
                <path d="M0 3.500h347" stroke-width="5" stroke-dasharray="1 2.470"/>
                <path d="M0 5h347" stroke-width="8" stroke-dasharray="1 16.350"/>
                <path d="M0 6h347" stroke-width="10" stroke-dasharray="1.500 33.200"/>
                <path d="M0 .5h347M346.500 0v10" stroke-width="1"/>
              </svg>
            </div>
            <div class="seek"><input type="range" min="0" max="100" value="0" aria-label="Position"><span>:00</span></div>
            <div class="transport">
              <button class="sq" aria-label="First"><svg><use href="#first"/></svg></button>
              <button class="wd" aria-label="Rewind"><svg><use href="#rew"/></svg></button>
              <button class="sq mid" aria-label="Add mark"><svg><use href="#plus"/></svg></button>
              <button class="wd" aria-label="Timer"><svg class="gray"><use href="#clock"/></svg></button>
              <button class="wd" aria-label="Forward"><svg><use href="#ffw"/></svg></button>
              <button class="sq" aria-label="Last"><svg><use href="#last"/></svg></button>
            </div>
          </section>
          <section>
            <h2 class="short"><svg><use href="#wctl4"/></svg>Play Controls</h2>
            <div class="controls">
              <button class="big" aria-label="Play"><span><svg><use href="#Pplay"/></svg></span></button>
              <button class="big" aria-label="Stop"><span><svg><use href="#Pstop"/></svg></span></button>
              <button aria-label="Pause"><span><svg><use href="#Ppause"/></svg></span></button>
              <button aria-label="Next"><span><svg><use href="#Pnext"/></svg></span></button>
              <button aria-label="Unload"><span><svg><use href="#Px"/></svg></span></button>
              <button aria-label="Reload"><span><svg><use href="#Prefresh"/></svg></span></button>
              <button aria-label="Load"><span><svg><use href="#Pload"/></svg></span></button>
            </div>
          </section>
          <section>
            <h2 class="tight"><svg><use href="#fader"/></svg>Fader Bar</h2>
            <div class="fader">
              <label for="fade">Fade (%)</label><input id="fade" value="100">
              <button class="out"><svg><use href="#fadeout"/></svg>Fade-Out</button>
              <span class="half">50%</span>
              <button class="in">Fade-In<svg><use href="#fadein"/></svg></button>
              <button class="live"><svg class="gray"><use href="#bolt"/></svg>Apply Live</button>
            </div>
            <div class="level"><span>0</span><input type="range" min="0" max="100" value="100" aria-label="Fade level"><span>100%</span></div>
            <div class="wedge">
              <button aria-label="Minimum"><svg><use href="#first"/></svg></button>
              <div class="ramp"><button aria-label="Middle"><svg><use href="#plus"/></svg></button></div>
              <button aria-label="Maximum"><svg><use href="#last"/></svg></button>
            </div>
          </section>
          <section>
            <h2><svg class="gray"><use href="#vol"/></svg>Volume</h2>
          </section>
        </div>
        <div class="splitter"></div>
        <div class="settings">
          <h2><svg><use href="#wcrop"/></svg>Media Screen Dimensions</h2>
          <div class="fields">
            <label for="f1"><svg><use href="#mon"/></svg>Target Display</label><input id="f1" class="lit">
            <label for="f2"><svg><use href="#loc"/></svg>Location,Size</label><input id="f2">
            <label for="f3">Screen Alignment</label><input id="f3">
            <label for="f4"><svg><use href="#size"/></svg>Size Mode</label><input id="f4" class="lit">
            <label for="f5"><svg><use href="#tmpl"/></svg>Template</label><input id="f5">
            <label for="f6"><svg class="gray"><use href="#case"/></svg>Marquee</label><input id="f6">
          </div>
          <h2><svg><use href="#wform"/></svg>Play Modifiers</h2>
          <fieldset>
            <legend>Play Control</legend>
            <label><input type="checkbox">UnLoad on Media End</label><label><input type="checkbox">Hide Screen</label>
            <label><input type="checkbox">Mute Audio on Load</label><label><input type="checkbox">Never Play</label>
          </fieldset>
          <fieldset>
            <legend>Repeat</legend>
            <label><input type="checkbox">Loop</label>
          </fieldset>
        </div>
        <div class="vscroll"><svg viewBox="0 0 10 10"><path d="M1 7l4-4 4 4"/></svg><div class="thumb"></div></div>
      </div>
      <div class="hscroll"><svg viewBox="0 0 10 10"><path d="M7 1L3 5l4 4"/></svg><div class="thumb"></div></div>
    </div>
  </main>
  <footer class="status"><span>10:59:57</span><svg class="sizer" viewBox="0 0 9 9"><path d="M7 1h2M4 4h2M7 4h2M1 7h2M4 7h2M7 7h2"/></svg></footer>
</div>

<div class="brand">
  <svg viewBox="0 0 70 70">
    <circle cx="35" cy="35" r="33" fill="#fff" stroke="#17365f" stroke-width="2.500"/>
    <path d="M19 40q-3-10 6-11 1-7 8-6 8-3 12 4 9 1 7 12-2 4-5 4-5-7-12 0-7-7-12 0-3 0-4-3z" fill="#17365f"/>
    <path d="M27 29q1-5 6-5M35 26q4-2 7 1" fill="none" stroke="#fff"/>
    <path d="M35 41q-7-8-12-4-5 4 0 8 5 3 12-4 7-8 12-4 5 4 0 8-5 3-12-4z" fill="#fff" stroke="#17365f" stroke-width="3.400"/>
    <path d="M35 41q-7-8-12-4-5 4 0 8 5 3 12-4 7-8 12-4 5 4 0 8-5 3-12-4z" fill="none" stroke="#fff" stroke-width="1.500"/>
  </svg>
  <div class="words"><strong>FileGit</strong><span>Free &amp; Unlimited</span></div>
</div>
</body>
</html>
```
FILE: styles.css
```css
* { box-sizing: border-box; }
html { height: 100%; }
body {
  margin: 0;
  height: 100vh;
  overflow: hidden;
  padding: 0 50px;
  background: linear-gradient(#6288d8 0%, #6a72d0 30%, #7d50b8 55%, #93309f 80%, #9a2098 100%);
  font: 10px/12px Roboto, "Liberation Sans", sans-serif;
  color: #222;
}
button, input { font: inherit; color: inherit; margin: 0; }
button { border: 0; padding: 0; background: none; }
h1, h2 { margin: 0; }
.sprite { position: absolute; width: 0; height: 0; }
.gray { filter: grayscale(1) opacity(.6); }
.ic { width: 14px; height: 14px; }

.window {
  height: 100%;
  display: flex;
  flex-direction: column;
  background: #f0f0ed;
  border-bottom: 2px solid #3c8cc8;
}
.titlebar {
  flex: none;
  display: flex;
  align-items: center;
  height: 26px;
  padding-left: 6px;
  background: #0075d4;
  color: #e6f1fb;
}
.titlebar .ic { background: #9ccce8; }
.titlebar h1 { margin-left: 5px; font: 10px/14px "Open Sans", "Noto Sans", sans-serif; }
.caption { display: flex; margin-left: auto; }
.caption button { width: 40px; height: 26px; }
.caption svg { width: 10px; height: 10px; fill: none; stroke: #e6f1fb; }
.menu { flex: none; display: flex; gap: 13px; height: 20px; padding-left: 12px; background: #f8f7f5; }

.bars { flex: none; background: #f5f4f2; border-bottom: 2px solid #b4b4b2; }
.bar { display: flex; height: 22px; }
.group { display: flex; align-items: center; }
.group::before {
  content: "";
  width: 2px;
  height: 14px;
  margin: 0 4px;
  background: repeating-linear-gradient(#b2b2b0 0 2px, transparent 2px 4px);
}
.bare::before { visibility: hidden; }
.wide::before { margin-left: 19px; }
.group button { width: 20px; height: 20px; display: flex; align-items: center; justify-content: center; }
.group svg { width: 15px; height: 15px; }
.group i { width: 1px; height: 14px; margin: 0 2px; background: #c4c4c2; }
.group .text { width: auto; padding-right: 2px; font: 11px/16px "Open Sans", "Noto Sans", sans-serif; }
.group .text svg { width: 12px; height: 12px; margin: 0 2px 0 1px; }
.group .on { border: 1px solid #3f7f98; background: #e2eef4; }
.group .hot { background: #cfcdf0; }
.group .drop { width: 26px; }
.drop::after { content: ""; border: 3px solid transparent; border-top-color: #222; border-bottom: 0; margin-left: 2px; }
.group .letter { font: bold 15px/20px "Liberation Sans", sans-serif; }
.group .small { width: 17px; margin-right: 3px; height: 16px; color: #22224a; }
.group .amber { color: #f09a28; }
.group .violet { color: #5a4ce0; }
.group .rt { width: 13px; font-size: 11px; }
.more { align-self: flex-end; width: 10px; height: 13px; background: #dededc; display: flex; justify-content: center; align-items: center; }
.more::after { content: ""; border: 3px solid transparent; border-top-color: #111; border-bottom: 0; outline: 0; }
.more::before { content: ""; width: 6px; height: 1px; margin: 0 -6px 7px 0; background: #111; }
.first-more, .last-more { margin-left: auto; }
.bar .first-more + .group { width: 33px; }

.work { flex: 1; min-height: 0; display: flex; }
.medialist { flex: none; width: 72px; background: #fdfdfc; }
.content { flex: 1; min-width: 0; display: flex; flex-direction: column; margin-left: 5px; border-left: 2px solid #777; }
.panes { flex: 1; min-height: 0; display: flex; overflow: hidden; color: #a0a09e; }
.player { flex: 428 1 0; min-width: 0; padding: 5px 9px 0 4px; }
.splitter { flex: none; width: 3px; margin-top: 2px; background: #979795; }
.settings { flex: 210 1 0; min-width: 0; padding: 5px 0 0 8px; overflow: hidden; }

h2 {
  display: flex;
  align-items: center;
  gap: 8px;
  height: 16px;
  padding-left: 2px;
  background: #9f9f9d;
  color: #333;
  font: bold 13px/16px "Liberation Sans", sans-serif;
  white-space: nowrap;
}
h2 svg { width: 14px; height: 14px; }
.short { margin-right: 5px; }
.tight { gap: 5px; }

.position { display: grid; grid-template-columns: 16px 1fr 47px; column-gap: 1px; align-items: center; padding: 3px 0 0 4px; }
.times { display: flex; justify-content: space-between; height: 16px; padding: 2px 51px 0 10px; }
.loaded { padding-top: 2px; }
.progress { height: 22px; border: 1px solid #bfc1bc; background: #e4e5e1; }
.lamps { display: flex; align-items: center; gap: 4px; padding-left: 4px; }
.lamp { flex: none; width: 20px; height: 20px; background: radial-gradient(circle, #d0d0ce 0 5px, #aaa 7px, #000 8px); }
.lamps .ic { margin-bottom: 6px; }
.ruler { width: 100%; height: 12px; background: #fdfdfc; stroke: #333; }
.seek { display: flex; align-items: center; height: 22px; margin: 0 34px 0 26px; gap: 6px; }
.seek input { flex: 1; }

input[type=range] { appearance: none; height: 16px; min-width: 0; background: none; }
input[type=range]::-webkit-slider-runnable-track { height: 3px; background: #dadad8; border-top: 1px solid #cfcfcc; }
input[type=range]::-webkit-slider-thumb {
  appearance: none;
  width: 10px;
  height: 15px;
  margin-top: -6px;
  background: #c6c6c3;
  clip-path: polygon(0 0, 100% 0, 100% 75%, 50% 100%, 0 75%);
}

.transport { display: flex; gap: 7px; padding: 0 48px 11px 22px; }
.transport button { height: 26px; background: #cbcbc8; border: 1px solid #c2c2bf; }
.transport svg, .wedge svg { width: 16px; height: 16px; vertical-align: middle; }
.transport .sq { flex: 0 0 27px; }
.transport .wd { flex: 0 1 54px; }
.transport .mid { margin: 0 4px 0 auto; }

.controls { display: flex; gap: 4px; padding: 4px 6px 10px 3px; }
.controls button { flex: 33 1 0; height: 43px; padding: 4px; background: #cdcdca; border: 1px solid #c1c1be; }
.controls .big { flex-grow: 73; }
.controls span { display: flex; align-items: center; justify-content: center; height: 100%; border: 1px solid #bdbdba; border-radius: 3px; background: linear-gradient(#d8d8d5 50%, #ccccc9 50%); }
.controls svg { flex: none; width: 28px; height: 28px; }

.fader { display: flex; height: 25px; padding: 6px 0 0 9px; line-height: 19px; }
.fader input { width: 38px; height: 16px; margin: 2px 18px 0 10px; padding: 0 3px; border: 1px solid #5ca85c; background: #078407; color: #3a7a2a; }
.fader button { display: flex; align-items: center; justify-content: center; gap: 4px; height: 19px; background: #cbcbc8; border: 1px solid #c2c2bf; }
.fader svg { width: 13px; height: 13px; }
.fader .out, .fader .in { flex: 0 0 63px; }
.fader .live { flex: 0 0 81px; margin-left: auto; }
.half { width: 47px; line-height: 27px; text-align: center; }
.level { display: flex; align-items: center; height: 15px; gap: 8px; padding: 0 21px 0 9px; }
.level input { flex: 1; }
.level span:first-child { width: 9px; }
.wedge { display: flex; gap: 6px; padding: 7px 29px 12px 3px; }
.wedge button { flex: none; width: 19px; height: 19px; background: #cbcbc8; border: 1px solid #c2c2bf; }
.ramp { flex: 1; display: flex; justify-content: center; margin-left: 7px; position: relative; }
.ramp::before { content: ""; position: absolute; inset: 3px 0 1px; background: #c6c6c3; clip-path: polygon(0 100%, 100% 0, 100% 100%); }
.ramp button { position: relative; }

.fields { display: grid; grid-template-columns: 92px 1fr; column-gap: 9px; row-gap: 9px; padding: 8px 0 12px; align-items: center; }
.fields label { display: flex; align-items: center; justify-content: flex-end; gap: 5px; white-space: nowrap; }
.fields svg { width: 14px; height: 14px; }
.fields input { width: calc(100% + 10px); height: 18px; border: 1px solid #c6c6c3; background: #f0f0ed; }
.fields .lit { background: #fafaf9; }
fieldset { display: grid; grid-template-columns: 133px 133px; row-gap: 7px; margin: 5px -90px 7px 5px; padding: 4px 10px 8px; border: 1px solid #dcdcd9; }
legend { padding: 0 2px; margin-left: -4px; }
fieldset label { display: flex; align-items: center; gap: 5px; height: 13px; white-space: nowrap; }
input[type=checkbox] { appearance: none; width: 12px; height: 12px; border: 1px solid #cbcbc8; background: #fdfdfc; }

.vscroll { flex: none; width: 15px; padding-right: 2px; display: flex; flex-direction: column; align-items: center; }
.vscroll svg, .hscroll svg { flex: none; width: 8px; height: 8px; margin: 3px; fill: none; stroke: #333; stroke-width: 2; }
.vscroll .thumb { width: 13px; height: 92px; background: #c9c9c6; }
.hscroll { flex: none; display: flex; align-items: center; height: 15px; padding-left: 1px; border-top: 1px solid #f8f8f6; }
.hscroll .thumb { flex: 0 1 456px; height: 13px; background: #cbcbc8; }
.status { flex: none; display: flex; justify-content: space-between; align-items: center; height: 19px; padding: 0 2px 0 3px; border-top: 1px solid #d8d8d5; font: 10px/14px "Open Sans", "Noto Sans", sans-serif; }
.sizer { align-self: flex-end; width: 9px; height: 9px; stroke: #888; stroke-width: 2; }

.brand {
  position: absolute;
  right: 10px;
  bottom: 10px;
  display: flex;
  align-items: center;
  gap: 14px;
  padding: 4px 9px 5px 4px;
  background: #fff;
  color: #17365f;
}
.brand svg { width: 70px; height: 70px; }
.words { display: flex; flex-direction: column; align-items: center; }
.words strong { font: 44px/48px "Liberation Serif", serif; }
.words span { display: flex; align-items: center; gap: 3px; align-self: stretch; justify-content: center; font: 10px/12px "Liberation Serif", serif; white-space: nowrap; }
.words span::before, .words span::after { content: ""; flex: 1; height: 3px; background: #17365f; }
```
